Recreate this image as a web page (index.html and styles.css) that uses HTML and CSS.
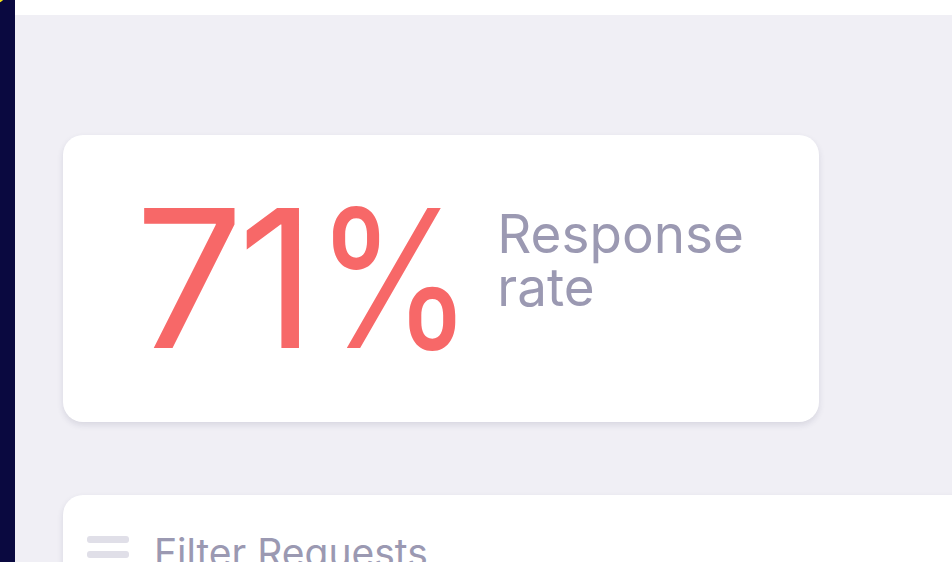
FILE: index.html
```html
<!DOCTYPE html>
<html lang="en">
<head>
<meta charset="utf-8">
<title>Response rate</title>
<link rel="stylesheet" href="styles.css">
</head>
<body>
<div class="app">
  <aside class="sidebar"><span class="logo-dot"></span></aside>
  <div class="main">
    <header class="topbar"></header>
    <main class="content">
      <section class="stat-card">
        <div class="stat-value">71<span class="pct">%</span></div>
        <div class="stat-label">Response<br>rate</div>
      </section>
      <section class="filter-card">
        <div class="filter-head">
          <span class="hamburger"><i></i><i></i><i></i></span>
          <span class="filter-title">Filter Requests</span>
        </div>
      </section>
    </main>
  </div>
</div>
</body>
</html>
```
FILE: styles.css
```css
* { box-sizing: border-box; }
html, body { margin: 0; padding: 0; height: 100%; overflow: hidden; }
body { font-family: Inter, "Noto Sans", sans-serif; background: #f0eff5; }
.app { display: flex; height: 100%; }
.sidebar { position: relative; width: 15px; flex: 0 0 15px; background: #0a0940; overflow: hidden; }
.logo-dot { position: absolute; left: -22px; top: -26px; width: 30px; height: 30px; border-radius: 50%; background: #f2e31b; }
.main { flex: 1; display: flex; flex-direction: column; min-width: 0; }
.topbar { height: 15px; background: #ffffff; flex: 0 0 15px; }
.content { padding: 120px 0 0 48px; display: flex; flex-direction: column; gap: 73px; }
.stat-card { width: 756px; height: 287px; background: #fff; border-radius: 20px; box-shadow: 0 3px 6px rgba(40, 38, 80, 0.12); display: flex; align-items: flex-start; padding: 47px 0 0 72px; }
.stat-value { font-size: 192px; line-height: 192px; color: #f76868; font-weight: 400; letter-spacing: -6px; white-space: nowrap; }
.pct { display: inline-block; transform: scaleX(0.84); transform-origin: left center; margin-right: -41px; margin-left: 5px; }
.stat-label { margin-left: 41px; margin-top: 26px; font-size: 53px; line-height: 53px; color: #9b99b2; }
.filter-card { width: 1000px; height: 200px; background: #fff; border-radius: 20px; box-shadow: 0 3px 6px rgba(40, 38, 80, 0.12); padding: 41px 24px; }
.filter-head { display: flex; align-items: flex-start; gap: 25px; }
.hamburger { display: flex; flex-direction: column; gap: 8px; width: 42px; flex: 0 0 42px; }
.hamburger i { display: block; height: 7px; border-radius: 3px; background: #e0dfe8; }
.filter-title { font-size: 39px; line-height: 39px; color: #9b99b2; margin-top: -3px; }
```
